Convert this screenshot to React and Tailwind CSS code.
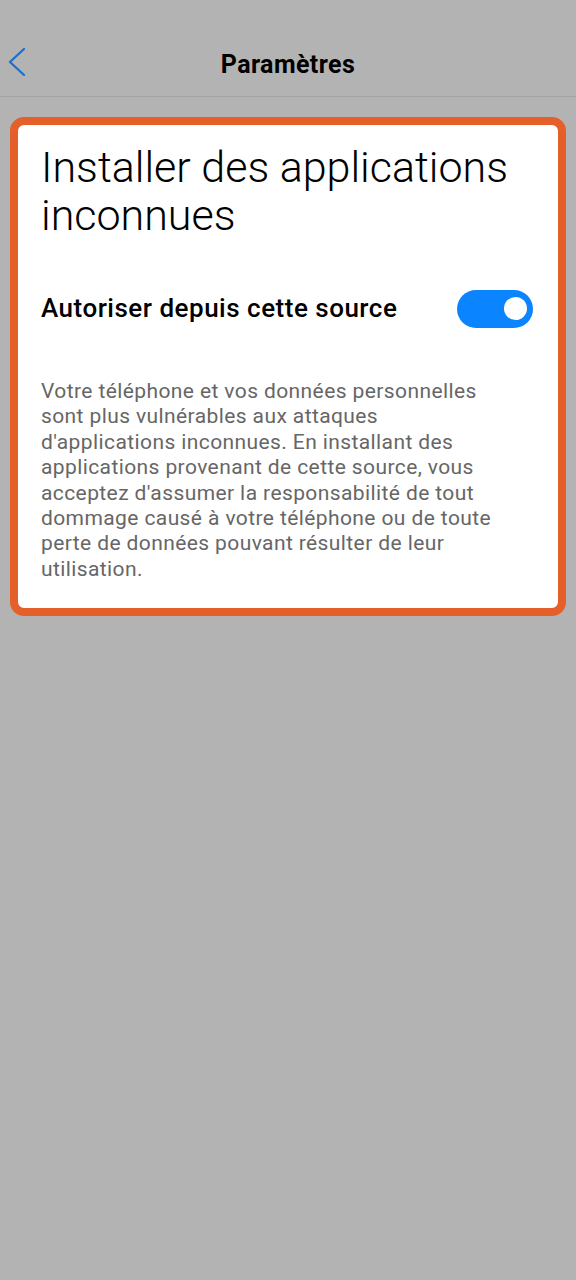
export default function App() {
  return (
    <div className="min-h-[1280px] w-full bg-[#b3b3b3] font-['Roboto',sans-serif]">
      <div className="relative flex h-[97px] items-center justify-center border-b border-[#a3a3a3] pt-[34px]">
        <button className="absolute left-[3px] top-[43px] p-1 text-[#1a6fd0]">
          <svg width="20" height="30" viewBox="0 0 20 30" fill="none">
            <path d="M17 2 L3 15 L17 28" stroke="currentColor" strokeWidth="2.3" strokeLinecap="round" strokeLinejoin="round" />
          </svg>
        </button>
        <h1 className="text-[25px] font-bold tracking-[0.4px] text-black">Paramètres</h1>
      </div>

      <div className="mx-[10px] mt-[20px] rounded-[14px] border-[8px] border-[#e55f2b] bg-white pb-[26px] pl-[23px] pr-[25px] pt-[18px]">
        <h2 className="text-[43px] font-light leading-[48px] text-black">
          Installer des applications inconnues
        </h2>

        <div className="mt-[50px] flex items-center justify-between">
          <span className="text-[26px] font-medium tracking-[0.5px] text-black">Autoriser depuis cette source</span>
          <div className="flex h-[38px] w-[76px] items-center justify-end rounded-full bg-[#0a84ff] pr-[6px]">
            <div className="h-[23px] w-[23px] rounded-full bg-white" />
          </div>
        </div>

        <p className="mt-[51px] max-w-[470px] text-[21px] leading-[25.4px] tracking-[0.4px] text-[#666666]">
          Votre téléphone et vos données personnelles sont plus vulnérables aux attaques d'applications inconnues. En installant des applications provenant de cette source, vous acceptez d'assumer la responsabilité de tout dommage causé à votre téléphone ou de toute perte de données pouvant résulter de leur utilisation.
        </p>
      </div>
    </div>
  );
}
